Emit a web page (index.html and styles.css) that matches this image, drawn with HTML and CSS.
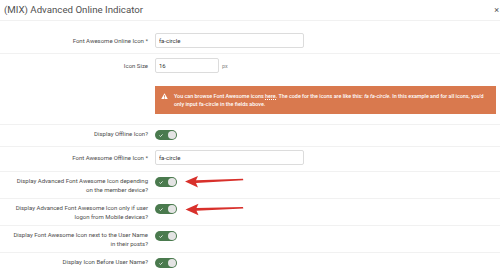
FILE: index.html
```html
<!DOCTYPE html>
<html lang="en">
<head>
    <meta charset="UTF-8">
    <meta name="viewport" content="width=device-width, initial-scale=1.0">
    <title>(MIX) Advanced Online Indicator</title>
    <link rel="stylesheet" href="styles.css">
</head>
<body>
    <div class="dialog">
        <div class="header">
            <span class="title">(MIX) Advanced Online Indicator</span>
            <span class="close">&times;</span>
        </div>

        <div class="row row-first">
            <div class="label label-input">Font Awesome Online Icon <span class="req">*</span></div>
            <div class="control"><input type="text" class="text-input wide" value="fa-circle"></div>
        </div>

        <div class="row row-size">
            <div class="label label-input">Icon Size</div>
            <div class="control">
                <div class="size-line">
                    <input type="text" class="text-input narrow" value="16">
                    <span class="unit">px</span>
                </div>
                <div class="alert">
                    <svg class="alert-icon" viewBox="0 0 12 11" width="7" height="6.5">
                        <path d="M6 0.4 L11.8 10.6 L0.2 10.6 Z" fill="#fff"/>
                        <rect x="5.3" y="3.6" width="1.4" height="4" fill="#d9794e"/>
                        <rect x="5.3" y="8.3" width="1.4" height="1.3" fill="#d9794e"/>
                    </svg>
                    <div class="alert-text">
                        You can browse Font Awesome icons <span class="link">here</span>. The code for the icons are like this: <em>fa fa-circle</em>. In this example and for all icons, you'd<br>
                        only input fa-circle in the fields above.
                    </div>
                </div>
            </div>
        </div>

        <div class="row row-toggle">
            <div class="label">Display Offline Icon?</div>
            <div class="control"><span class="toggle"><svg class="check" viewBox="0 0 4 3" width="4" height="3"><path d="M0.4 1.5 L1.5 2.5 L3.6 0.4" fill="none" stroke="#fff" stroke-width="0.8"/></svg><span class="knob"></span></span></div>
        </div>

        <div class="row row-input">
            <div class="label label-input">Font Awesome Offline Icon <span class="req">*</span></div>
            <div class="control"><input type="text" class="text-input wide" value="fa-circle"></div>
        </div>

        <div class="row">
            <div class="label">Display Advanced Font Awesome Icon depending<br>on the member device?</div>
            <div class="control"><span class="toggle"><svg class="check" viewBox="0 0 4 3" width="4" height="3"><path d="M0.4 1.5 L1.5 2.5 L3.6 0.4" fill="none" stroke="#fff" stroke-width="0.8"/></svg><span class="knob"></span></span></div>
        </div>

        <div class="row">
            <div class="label">Display Advanced Font Awesome Icon only if user<br>logon from Mobile devices?</div>
            <div class="control"><span class="toggle"><svg class="check" viewBox="0 0 4 3" width="4" height="3"><path d="M0.4 1.5 L1.5 2.5 L3.6 0.4" fill="none" stroke="#fff" stroke-width="0.8"/></svg><span class="knob"></span></span></div>
        </div>

        <div class="row">
            <div class="label">Display Font Awesome Icon next to the User Name<br>in their posts?</div>
            <div class="control"><span class="toggle"><svg class="check" viewBox="0 0 4 3" width="4" height="3"><path d="M0.4 1.5 L1.5 2.5 L3.6 0.4" fill="none" stroke="#fff" stroke-width="0.8"/></svg><span class="knob"></span></span></div>
        </div>

        <div class="row">
            <div class="label">Display Icon Before User Name?</div>
            <div class="control"><span class="toggle"><svg class="check" viewBox="0 0 4 3" width="4" height="3"><path d="M0.4 1.5 L1.5 2.5 L3.6 0.4" fill="none" stroke="#fff" stroke-width="0.8"/></svg><span class="knob"></span></span></div>
        </div>

        <!-- red arrows drawn over the screenshot -->
        <svg class="arrows" width="500" height="269" viewBox="0 0 500 269">
            <path d="M185 181.6 L198 176 L196 180.2 L243 178.7 L243.3 180.2 L196 183 L198 187.4 Z" fill="#d8302b"/>
            <path d="M185.5 209.4 L198.5 203.8 L196.5 208 L243 207 L243.3 208.5 L196.5 210.8 L198.5 215.2 Z" fill="#d8302b"/>
        </svg>
    </div>
</body>
</html>
```

FILE: styles.css
```css
body {
    margin: 0;
    font-family: Roboto, "Liberation Sans", sans-serif;
    background: #fff;
    color: #4a4a4a;
}
.dialog {
    position: relative;
    width: 500px;
    height: 269px;
    overflow: hidden;
}
.header {
    box-sizing: border-box;
    display: flex;
    align-items: center;
    height: 21px;
    padding: 0 1px 0 4px;
    border-bottom: 1px solid #f1f1f1;
}
.title {
    font-size: 9.7px;
    line-height: 12px;
    color: #505050;
}
.close {
    margin-left: auto;
    font-size: 9px;
    line-height: 9px;
    color: #555;
}
.row {
    display: flex;
    align-items: flex-start;
    padding: 4px 0;
    border-bottom: 1px solid #f1f1f1;
}
.row-first { padding: 12px 0 5px; }
.row-size { padding: 4px 0 10px; }
.row-toggle { padding: 4px 0 6px; }
.row-input { padding: 3px 0 6px; }
.label {
    width: 148px;
    flex-shrink: 0;
    text-align: right;
    font-size: 6px;
    line-height: 9px;
    color: #4d4d4d;
}
.label-input {
    line-height: 15px;
}
.control {
    display: flex;
    flex-direction: column;
    margin-left: 7px;
}
.text-input {
    display: block;
    box-sizing: border-box;
    height: 15px;
    margin: 0;
    padding: 0 3px;
    border: 1px solid #dcdcdc;
    border-radius: 2px;
    font-family: Roboto, sans-serif;
    font-size: 6px;
    color: #333;
    background: #fff;
    outline: none;
}
.wide { width: 149px; }
.narrow { width: 64px; }
.size-line {
    display: flex;
    align-items: center;
    gap: 3px;
}
.unit {
    font-size: 5.5px;
    color: #888;
}
.alert {
    display: flex;
    align-items: flex-start;
    box-sizing: border-box;
    width: 341px;
    height: 28px;
    margin-top: 13px;
    padding: 6px 6px 0 6px;
    background: #d9794e;
    color: #fff;
}
.alert-icon {
    margin-top: 0.5px;
    flex-shrink: 0;
}
.alert-text {
    margin-left: 6px;
    font-size: 5.4px;
    line-height: 8px;
    font-weight: 500;
    white-space: nowrap;
}
.link {
    border-bottom: 1px dotted #fff;
}
.toggle {
    display: flex;
    align-items: center;
    justify-content: space-between;
    box-sizing: border-box;
    width: 22px;
    height: 10px;
    margin-top: 1px;
    padding: 0 1px 0 4px;
    border-radius: 5px;
    background: #4a7a4e;
}
.knob {
    width: 8px;
    height: 8px;
    border-radius: 50%;
    background: #e4e4e4;
}
.arrows {
    position: absolute;
    left: 0;
    top: 0;
    pointer-events: none;
}
```
